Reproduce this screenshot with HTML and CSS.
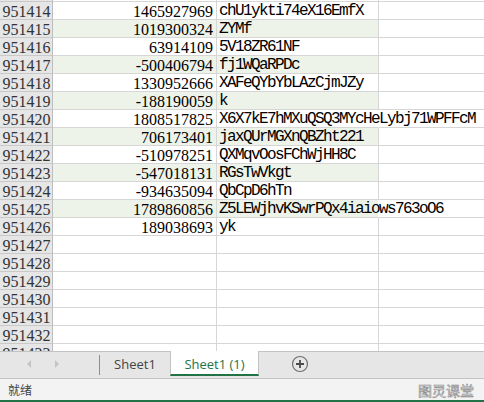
FILE: index.html
```html
<!DOCTYPE html>
<html lang="zh-CN">
<head>
<meta charset="utf-8">
<title>Sheet1 (1)</title>
<link rel="stylesheet" href="styles.css">
</head>
<body>
<div class="window">
  <div class="sheet">
    <div class="grid">
      <div class="row"><div class="rh"></div><div class="c num"></div><div class="c txt"></div><div class="c pad"></div></div>
      <div class="row"><div class="rh">951414</div><div class="c num">1465927969</div><div class="c txt">chU1ykti74eX16EmfX</div><div class="c pad"></div></div>
      <div class="row band"><div class="rh">951415</div><div class="c num">1019300324</div><div class="c txt">ZYMf</div><div class="c pad"></div></div>
      <div class="row"><div class="rh">951416</div><div class="c num">63914109</div><div class="c txt">5V18ZR61NF</div><div class="c pad"></div></div>
      <div class="row band"><div class="rh">951417</div><div class="c num">-500406794</div><div class="c txt">fj1WQaRPDc</div><div class="c pad"></div></div>
      <div class="row"><div class="rh">951418</div><div class="c num">1330952666</div><div class="c txt">XAFeQYbYbLAzCjmJZy</div><div class="c pad"></div></div>
      <div class="row band"><div class="rh">951419</div><div class="c num">-188190059</div><div class="c txt">k</div><div class="c pad"></div></div>
      <div class="row spill"><div class="rh">951420</div><div class="c num">1808517825</div><div class="c txt">X6X7kE7hMXuQSQ3MYcHeLybj71WPFFcM</div><div class="c pad"></div></div>
      <div class="row band"><div class="rh">951421</div><div class="c num">706173401</div><div class="c txt">jaxQUrMGXnQBZht221</div><div class="c pad"></div></div>
      <div class="row"><div class="rh">951422</div><div class="c num">-510978251</div><div class="c txt">QXMqvOosFChWjHH8C</div><div class="c pad"></div></div>
      <div class="row band"><div class="rh">951423</div><div class="c num">-547018131</div><div class="c txt">RGsTwVkgt</div><div class="c pad"></div></div>
      <div class="row"><div class="rh">951424</div><div class="c num">-934635094</div><div class="c txt">QbCpD6hTn</div><div class="c pad"></div></div>
      <div class="row band spill"><div class="rh">951425</div><div class="c num">1789860856</div><div class="c txt">Z5LEWjhvKSwrPQx4iaiows763oO6</div><div class="c pad"></div></div>
      <div class="row last"><div class="rh">951426</div><div class="c num">189038693</div><div class="c txt">yk</div><div class="c pad"></div></div>
      <div class="row"><div class="rh">951427</div><div class="c"></div><div class="c"></div><div class="c pad"></div></div>
      <div class="row"><div class="rh">951428</div><div class="c"></div><div class="c"></div><div class="c pad"></div></div>
      <div class="row"><div class="rh">951429</div><div class="c"></div><div class="c"></div><div class="c pad"></div></div>
      <div class="row"><div class="rh">951430</div><div class="c"></div><div class="c"></div><div class="c pad"></div></div>
      <div class="row"><div class="rh">951431</div><div class="c"></div><div class="c"></div><div class="c pad"></div></div>
      <div class="row"><div class="rh">951432</div><div class="c"></div><div class="c"></div><div class="c pad"></div></div>
      <div class="row"><div class="rh">951433</div><div class="c"></div><div class="c"></div><div class="c pad"></div></div>
    </div>
  </div>

  <div class="tabbar">
    <div class="nav">
      <span class="arrow left"></span>
      <span class="arrow right"></span>
    </div>
    <div class="tabs">
      <div class="tab">Sheet1</div>
      <div class="tab active">Sheet1 (1)</div>
      <div class="add">
        <svg width="18" height="18" viewBox="0 0 18 18" aria-hidden="true">
          <circle cx="9" cy="9" r="7.5" fill="none" stroke="#6f6f6f" stroke-width="1.2"/>
          <path d="M9 5v8M5 9h8" stroke="#4a4a4a" stroke-width="1.8" fill="none"/>
        </svg>
      </div>
    </div>
  </div>

  <div class="status">
    <span class="ready">就绪</span>
    <span class="mark">图灵课堂</span>
  </div>
</div>
</body>
</html>
```
FILE: styles.css
```css
* { box-sizing: border-box; }

html, body {
  margin: 0;
  padding: 0;
  background: #ffffff;
}

.window {
  width: 484px;
  height: 402px;
  display: flex;
  flex-direction: column;
  overflow: hidden;
}

/* worksheet grid */
.sheet {
  height: 351px;
  overflow: hidden;
  flex: none;
}

.grid {
  margin-top: -16px;
}

.row {
  display: grid;
  grid-template-columns: 53px 164px 162px 1fr;
  height: 18px;
  font-family: "Liberation Mono", "Courier New", monospace;
  font-size: 16px;
  letter-spacing: -1.6px;
  color: #000;
}

/* digits: serif face with half-em figures */
.rh,
.num {
  font-family: "Liberation Serif", "Times New Roman", serif;
  letter-spacing: 0;
}

.rh {
  background: #e6e6e6;
  border-right: 1px solid #bdbdbd;
  border-bottom: 1px solid #c9c9c9;
  color: #333;
  text-align: center;
  line-height: 15px;
  padding-top: 2px;
  padding-left: 1px;
  white-space: nowrap;
}

.c {
  border-right: 1px solid #d6d6d6;
  border-bottom: 1px solid #d6d6d6;
  line-height: 15px;
  padding-top: 2px;
  white-space: nowrap;
}

.num {
  text-align: right;
  padding-right: 3px;
}

.txt {
  padding-left: 2px;
  overflow: visible;
}

.pad {
  border-right: none;
}

.band .num,
.band .txt {
  background: #eef3e9;
}

/* long strings run on into the next column */
.spill .txt {
  border-right-color: #ffffff;
}

/* tab strip */
.tabbar {
  height: 28px;
  flex: none;
  display: flex;
  background: #e6e6e6;
  border-top: 1px solid #c3c3c3;
  border-bottom: 1px solid #c3c3c3;
  font-family: "Open Sans", "Noto Sans", sans-serif;
  font-size: 13px;
}

.nav {
  width: 100px;
  display: flex;
  align-items: center;
  padding-left: 27px;
  gap: 24px;
  position: relative;
}

.nav::after {
  content: "";
  position: absolute;
  right: 0;
  top: 3px;
  bottom: 3px;
  width: 1px;
  background: #8e8e8e;
}

.arrow {
  width: 0;
  height: 0;
  border-top: 4px solid transparent;
  border-bottom: 4px solid transparent;
  margin-top: -2px;
}

.arrow.left { border-right: 4px solid #c4c4c4; }
.arrow.right { border-left: 4px solid #c4c4c4; }

.tabs {
  display: flex;
  align-items: stretch;
}

.tab {
  width: 70px;
  text-align: center;
  color: #444;
  line-height: 22px;
  padding-top: 1px;
}

.tab.active {
  width: 89px;
  margin-top: -1px;
  height: 25px;
  background: #ffffff;
  color: #217346;
  border-left: 1px solid #c3c3c3;
  border-right: 1px solid #c3c3c3;
  border-bottom: 2px solid #217346;
  line-height: 22px;
  padding-top: 2px;
}

.add {
  width: 82px;
  display: flex;
  align-items: center;
  justify-content: center;
  padding-bottom: 2px;
}

.add svg { display: block; }

/* status bar */
.status {
  flex: 1;
  display: flex;
  align-items: center;
  justify-content: space-between;
  padding: 0 10px 0 8px;
  background: #f3f3f3;
  border-bottom: 2px solid #217346;
  font-family: "Noto Sans CJK SC", "Noto Sans", sans-serif;
}

.ready {
  font-size: 12px;
  color: #444;
}

.mark {
  font-size: 14px;
  color: #f6f6f6;
  -webkit-text-stroke: 0.6px #8a8a8a;
  letter-spacing: 0;
}
```
